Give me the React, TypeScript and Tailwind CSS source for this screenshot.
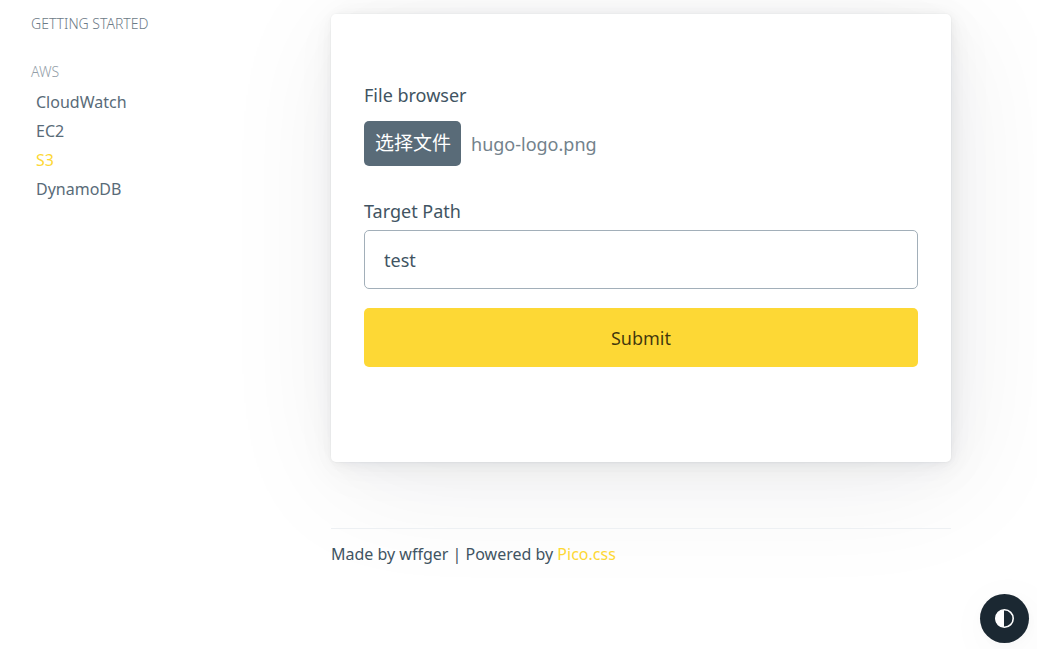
import { useState } from "react";

const services = ["CloudWatch", "EC2", "S3", "DynamoDB"];

function Sidebar() {
  return (
    <aside className="w-[300px] shrink-0 pt-[14px]">
      <nav aria-label="Documentation">
        <a href="#getting-started" className="block text-sm leading-5 font-light text-[#6d7b87] uppercase">
          Getting started
        </a>
        <h2 className="mt-7 text-sm leading-5 font-light text-[#939ea8] uppercase">AWS</h2>
        <ul className="mt-[6px] pl-[5px]">
          {services.map((name) => (
            <li key={name} className="h-[29px]">
              <a
                href={`#${name.toLowerCase()}`}
                aria-current={name === "S3" ? "page" : undefined}
                className="block text-base leading-[29px] text-[#596b78] aria-[current=page]:text-[#fdd835]"
              >
                {name}
              </a>
            </li>
          ))}
        </ul>
      </nav>
    </aside>
  );
}

function UploadForm() {
  const [fileName, setFileName] = useState("hugo-logo.png");
  return (
    <article className="rounded-[5px] bg-white px-[33px] pt-[67px] pb-[95px] shadow-[0_1px_3px_rgba(27,40,50,0.017),1px_1px_8px_rgba(27,40,50,0.024),1px_2px_14px_rgba(27,40,50,0.03),2px_4px_26px_rgba(27,40,50,0.036),4px_8px_48px_rgba(27,40,50,0.043),8px_19px_126px_rgba(30,34,42,0.07),0_0_0_1px_rgba(27,40,50,0.015)]">
      <form onSubmit={(event) => event.preventDefault()}>
        <label htmlFor="file" className="block leading-7">
          File browser
        </label>
        <div className="mt-3 flex items-center gap-[10px]">
          <input
            id="file"
            type="file"
            className="peer sr-only"
            onChange={(event) => setFileName(event.target.files?.[0]?.name ?? "")}
          />
          <label
            htmlFor="file"
            className="flex h-[45px] cursor-pointer items-center rounded-[5px] bg-[#596b78] pr-[10px] pl-[11px] text-[19px] text-white"
          >
            选择文件
          </label>
          <span className="text-[#73828c]">{fileName}</span>
        </div>
        <label htmlFor="path" className="mt-[31px] block leading-7">
          Target Path
        </label>
        <input
          id="path"
          type="text"
          defaultValue="test"
          className="mt-[5px] block h-[59px] w-full rounded-[5px] border border-[#a2afb9] bg-white px-[19px]"
        />
        <button type="submit" className="mt-[19px] block h-[59px] w-full rounded-[5px] bg-[#fdd835] text-black/75">
          Submit
        </button>
      </form>
    </article>
  );
}

function ThemeSwitcher() {
  return (
    <button
      type="button"
      aria-label="Switch theme"
      className="fixed right-2 bottom-[6px] flex size-[49px] items-center justify-center rounded-full bg-[#1b2832] text-white shadow-[1px_2px_14px_rgba(27,40,50,0.03),4px_8px_48px_rgba(27,40,50,0.043),10px_19px_114px_rgba(27,40,50,0.06)]"
    >
      <svg viewBox="0 0 19 19" className="size-[19px]" aria-hidden="true">
        <circle cx="9.5" cy="9.5" r="8.7" fill="none" stroke="currentColor" strokeWidth="1.6" />
        <path d="M9 1a8.5 8.5 0 0 0 0 17z" fill="currentColor" />
      </svg>
    </button>
  );
}

export default function App() {
  return (
    <div className="overflow-x-clip bg-white font-['Noto_Sans','Noto_Sans_CJK_SC',sans-serif] text-lg text-[#415462]">
      <div className="flex min-h-screen pr-[86px] pl-[31px]">
        <Sidebar />
        <main className="min-w-0 flex-1 pt-[14px]">
          <UploadForm />
          <footer className="mt-[66px] border-t border-[#edf0f3] pt-[13px] text-base leading-6">
            Made by wffger | Powered by{" "}
            <a href="https://picocss.com" className="text-[#fdd835]">
              Pico.css
            </a>
          </footer>
        </main>
      </div>
      <ThemeSwitcher />
    </div>
  );
}
